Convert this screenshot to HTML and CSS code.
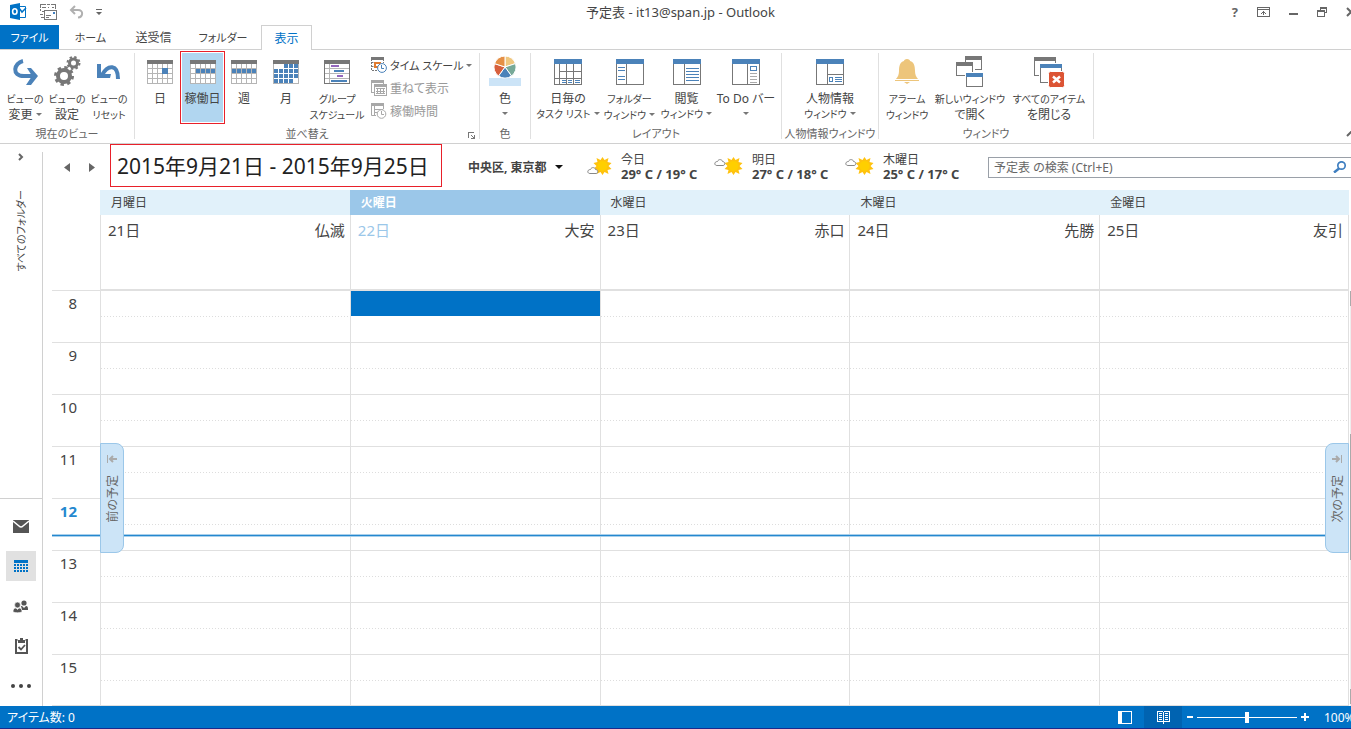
FILE: index.html
```html
<!DOCTYPE html>
<html lang="ja">
<head>
<meta charset="utf-8">
<title>予定表 - it13@span.jp - Outlook</title>
<link rel="stylesheet" href="styles.css">
</head>
<body>
<header class="titlebar">
  <div class="quick">
    <svg width="18" height="18" viewBox="0 0 18 18"><path fill="#fff" stroke="#0072c6" d="M8 3.500h7.500v11H8z"/><path d="M9 5l3 4 4-4" fill="none" stroke="#0072c6" stroke-width="1.500"/><path fill="#0072c6" d="M0 2l10-2v17L0 15z"/><ellipse cx="4.800" cy="8.500" rx="2.200" ry="2.800" fill="none" stroke="#fff" stroke-width="1.600"/></svg>
    <button class="plain" aria-label="送受信"><svg width="17" height="17" viewBox="0 0 17 17" fill="none" stroke="#777" shape-rendering="crispEdges"><path d="M.5 8V6M.5 5V1.500H6M7 1.500h3M11 1.500h4.500V6M2 4.500h4M8 4.500h1M12 4.500h2M0 11.500h3M1 14.500h3M2 8.500h2M4.500 7.500h12v9h-12zM6 12.500h5M6 14.500h3"/><path stroke="#3f7fc0" d="M13 9.500h2M13 10.500h2"/></svg></button>
    <button class="plain" aria-label="元に戻す"><svg width="15" height="14" viewBox="0 0 15 14" fill="none" stroke="#b0b0b0" stroke-width="2"><path d="M6 1L2 5l4 4M2 5h7c6 0 5 7 0 7.500"/></svg></button>
    <button class="plain" aria-label="カスタマイズ"><svg width="7" height="6" viewBox="0 0 7 6"><path fill="#666" d="M0 0h6v1H0zM0 3h6L3 6z"/></svg></button>
  </div>
  <h1 class="apptitle">予定表 - it13@span.jp - Outlook</h1>
  <div class="wincontrols">
    <button class="plain help" aria-label="ヘルプ">?</button>
    <button class="plain" aria-label="リボン"><svg width="13" height="11" viewBox="0 0 13 11" fill="none" stroke="#666" shape-rendering="crispEdges"><path d="M.5.500h12v9H.5zM0 2.500h13M6.500 4v4M5.500 5v1M7.500 5v1M4.500 6v1M8.500 6v1"/></svg></button>
    <button class="plain" aria-label="最小化"><svg width="9" height="11" viewBox="0 0 9 11"><path fill="#666" d="M0 6h9v2H0z"/></svg></button>
    <button class="plain" aria-label="元のサイズ"><svg width="10" height="11" viewBox="0 0 10 11" fill="none" stroke="#666" shape-rendering="crispEdges"><path d="M.5 4.500h7v5h-7zM0 3.500h8M3 3V.5h6.500v5H8M3 1.500h7"/></svg></button>
    <button class="plain" aria-label="閉じる"><svg width="10" height="11" viewBox="0 0 10 11"><path stroke="#666" stroke-width="2" d="M1 1l8 8M9 1L1 9"/></svg></button>
  </div>
</header>

<nav class="tabs">
  <button class="tab file">ファイル</button>
  <button class="tab home kana">ホーム</button>
  <button class="tab home">送受信</button>
  <button class="tab folder kana">フォルダー</button>
  <button class="tab active">表示</button>
</nav>

<section class="ribbon">
  <div class="group g-view">
    <div class="tools">
      <button class="big w42"><svg width="28" height="28" viewBox="0 0 28 28"><path fill="none" stroke="#4b82b9" stroke-width="4" d="M12 3C3 5 0 18 13 18h9"/><path fill="#4b82b9" d="M16 10h4l7 8-7 9h-5l6-9z"/></svg><span><small>ビューの</small><br>変更 <i class="arrow"></i></span></button>
      <button class="big w42"><svg width="28" height="32" viewBox="0 0 28 32" fill="none" stroke="#777"><circle cx="11" cy="20" r="6" stroke-width="4"/><circle cx="11" cy="20" r="8.500" stroke-width="3" stroke-dasharray="3.340 3.340"/><circle cx="20.500" cy="7" r="4" stroke-width="3"/><circle cx="20.500" cy="7" r="6" stroke-width="2" stroke-dasharray="2.360 2.360"/></svg><span><small>ビューの</small><br>設定</span></button>
      <button class="big w42"><svg width="26" height="24" viewBox="0 0 26 24"><path fill="none" stroke="#4b82b9" stroke-width="4" d="M6 15C12 4 22 4 22 19"/><path fill="#4b82b9" d="M1 4h4v10h10l-1 4H1z"/></svg><span><small>ビューの</small><br><small>リセット</small></span></button>
    </div>
    <h2>現在のビュー</h2>
  </div>
  <div class="group g-arrange">
    <div class="tools">
      <button class="big w42"><svg width="26" height="24" viewBox="0 0 26 24" shape-rendering="crispEdges"><path fill="none" stroke="#b5b5b5" d="M.5 4v19.500h25V4M5.500 4v20M10.500 4v20M15.500 4v20M20.500 4v20M0 8.500h26M0 13.500h26M0 18.500h26"/><path fill="#777" d="M0 0h26v4H0z"/><path fill="#4b82b9" d="M15 8h6v6h-6z"/></svg><span>日</span></button>
      <button class="big picked"><svg width="26" height="24" viewBox="0 0 26 24" shape-rendering="crispEdges"><path fill="#fff" d="M0 0h26v24H0z"/><path fill="none" stroke="#b5b5b5" d="M.5 4v19.500h25V4M5.500 4v20M10.500 4v20M15.500 4v20M20.500 4v20M0 8.500h26M0 13.500h26M0 18.500h26"/><path fill="#777" d="M0 0h26v4H0z"/><path fill="#4b82b9" d="M6 9h4v4H6zM11 9h4v4h-4zM16 9h4v4h-4zM21 9h4v4h-4z"/></svg><span>稼働日</span></button>
      <button class="big w42"><svg width="26" height="24" viewBox="0 0 26 24" shape-rendering="crispEdges"><path fill="none" stroke="#b5b5b5" d="M.5 4v19.500h25V4M5.500 4v20M10.500 4v20M15.500 4v20M20.500 4v20M0 8.500h26M0 13.500h26M0 18.500h26"/><path fill="#777" d="M0 0h26v4H0z"/><path fill="#4b82b9" d="M1 9h4v4H1zM6 9h4v4H6zM11 9h4v4h-4zM16 9h4v4h-4zM21 9h4v4h-4z"/></svg><span>週</span></button>
      <button class="big w42"><svg width="26" height="24" viewBox="0 0 26 24" shape-rendering="crispEdges"><path fill="none" stroke="#b5b5b5" d="M.5 4v19.500h25V4"/><path fill="#777" d="M0 0h26v4H0z"/><path fill="none" stroke="#4b82b9" stroke-width="4" stroke-dasharray="4 1" d="M11 6h14M1 11h24M1 16h24M1 21h19"/></svg><span>月</span></button>
      <button class="big w60"><svg width="26" height="24" viewBox="0 0 26 24" shape-rendering="crispEdges"><path fill="none" stroke="#b5b5b5" d="M5.500 4v20M0 8.500h26M0 13.500h26M0 18.500h26"/><path fill="none" stroke="#777" d="M.5 4v19.500h25V4"/><path fill="#777" d="M0 0h26v4H0z"/><path stroke="#9467bd" stroke-width="2" d="M7 6h8M13 16h6"/><path stroke="#4b82b9" stroke-width="2" d="M10 11h10M7 21h16"/></svg><span><small>グループ</small><br><small>スケジュール</small></span></button>
      <div class="stack">
        <button class="small kana"><svg width="16" height="16" viewBox="0 0 16 16" fill="none"><path stroke="#777" d="M.5 2v11.500H6M.5 5.500h3M.5 9.500h3M12.500 2v4" stroke-dasharray="2 1"/><path fill="#777" d="M0 0h13v3H0z"/><path stroke="#e07b2f" stroke-width="2" d="M4 6h5v4H4z"/><circle cx="11" cy="11" r="4.400" fill="#fff" stroke="#4b82b9"/><path stroke="#4b82b9" d="M10.500 8v3.500H13"/></svg><span>タイム スケール <i class="arrow"></i></span></button>
        <button class="small" disabled><svg width="16" height="16" viewBox="0 0 16 16" fill="none" stroke="#a8a8a8" shape-rendering="crispEdges"><path d="M.5 2v10.500H3M12.500 2v2M3.500 6v9.500h12V6M6.500 8v6M9.500 8v6M12.500 8v6M5 8.500h9M5 11.500h9M5 13.500h9"/><path stroke-width="3" d="M0 1.500h13M3 5.500h13"/></svg><span>重ねて表示</span></button>
        <button class="small" disabled><svg width="16" height="16" viewBox="0 0 16 16" fill="none" stroke="#a8a8a8"><path stroke-width="3" d="M0 1.500h13"/><path d="M.5 2v10.500H5M3.500 3v9M4 6.500h8M4 9.500h3M12.500 2v4"/><circle cx="10.500" cy="11" r="4.300" fill="#fff"/><path d="M10.500 8v3.500H13"/></svg><span>稼働時間</span></button>
      </div>
    </div>
    <h2>並べ替え</h2>
    <button class="plain launcher" aria-label="ダイアログ"><svg width="7" height="7" viewBox="0 0 7 7" fill="none" stroke="#777" shape-rendering="crispEdges"><path d="M.5 6V.5H6M3 3l3 3M6.500 3v3.500H3"/></svg></button>
  </div>
  <div class="group g-color">
    <div class="tools">
      <button class="big w42"><svg width="32" height="32" viewBox="0 0 32 32"><path fill="#cce4f7" d="M0 22h32v8H0z"/><g stroke="#fff"><path fill="#efc77f" d="M16 11V0a11 11 0 0 1 10.500 7.600z"/><path fill="#77a998" d="M16 11l10.500-3.400A11 11 0 0 1 22.500 20z"/><path fill="#4b82b9" d="M16 11l6.500 9a11 11 0 0 1-13 0z"/><path fill="#d75f3c" d="M16 11l-6.500 9A11 11 0 0 1 5.500 7.600z"/><path fill="#e58f45" d="M16 11L5.500 7.600A11 11 0 0 1 16 0z"/></g></svg><span>色<br><i class="arrow"></i></span></button>
    </div>
    <h2>色</h2>
  </div>
  <div class="group g-layout">
    <div class="tools">
      <button class="big w66"><svg width="28" height="26" viewBox="0 0 28 26" shape-rendering="crispEdges"><path fill="none" stroke="#777" d="M.5 5v20.500h27V5M5.500 5v20M12.500 5v20M19.500 5v20M5 12.500h22M0 19.500h28"/><path fill="#4b82b9" d="M0 0h28v5H0z"/><path stroke="#4b82b9" d="M8 21.500h4M14 21.500h4M21 21.500h5M8 23.500h4M14 23.500h4M21 23.500h5"/></svg><span>日毎の<br><small>タスク リスト</small> <i class="arrow"></i></span></button>
      <button class="big w56"><svg width="28" height="26" viewBox="0 0 28 26" shape-rendering="crispEdges"><path fill="none" stroke="#777" d="M.5 5v20.500h27V5M10.500 5v20"/><path fill="#4b82b9" d="M0 0h28v5H0z"/><path stroke="#4b82b9" d="M2 8.500h7M2 11.500h7M2 17.500h7M2 20.500h7"/></svg><span><small>フォルダー</small><br><small>ウィンドウ</small> <i class="arrow"></i></span></button>
      <button class="big w56"><svg width="28" height="26" viewBox="0 0 28 26" shape-rendering="crispEdges"><path fill="none" stroke="#777" d="M.5 5v20.500h27V5M11.500 5v20"/><path fill="#4b82b9" d="M0 0h28v5H0z"/><path stroke="#4b82b9" d="M13 9.500h13M13 12.500h13M13 15.500h13M13 18.500h13M13 21.500h13"/></svg><span>閲覧<br><small>ウィンドウ</small> <i class="arrow"></i></span></button>
      <button class="big w62"><svg width="28" height="26" viewBox="0 0 28 26" shape-rendering="crispEdges"><path fill="none" stroke="#777" d="M.5 5v20.500h27V5M15.500 5v20"/><path fill="#4b82b9" d="M0 0h28v5H0z"/><path fill="none" stroke="#4b82b9" d="M18.500 7.500h6v4h-6z"/><path stroke="#aaa" d="M18 14.500h7M18 17.500h7M18 20.500h7M18 23.500h7"/></svg><span>To Do バー<br><i class="arrow"></i></span></button>
    </div>
    <h2>レイアウト</h2>
  </div>
  <div class="group g-people">
    <div class="tools">
      <button class="big w56"><svg width="28" height="26" viewBox="0 0 28 26" shape-rendering="crispEdges"><path fill="none" stroke="#777" d="M.5 5v20.500h27V5M11.500 5v20M11 15.500h17"/><path fill="#4b82b9" d="M0 0h28v5H0z"/><path fill="none" stroke="#4b82b9" d="M13.500 18.500h3v4h-3zM19 18.500h7M19 20.500h7M19 22.500h7"/></svg><span>人物情報<br><small>ウィンドウ</small> <i class="arrow"></i></span></button>
    </div>
    <h2>人物情報ウィンドウ</h2>
  </div>
  <div class="group g-window">
    <div class="tools">
      <button class="big w50"><svg width="24" height="28" viewBox="0 0 24 28" fill="#edc57b"><path d="M12 1c2 0 3 1 3 2 4 1 5 5 5 10 0 3 1 6 3 8H1c2-2 3-5 3-8C4 8 5 4 9 3c0-1 1-2 3-2zM0 22h24v1H0zM9 24h6l-3 2z"/></svg><span><small>アラーム</small><br><small>ウィンドウ</small></span></button>
      <button class="big w76"><svg width="28" height="32" viewBox="0 0 28 32" shape-rendering="crispEdges"><path fill="#fff" stroke="#777" d="M9.500 1.500h16v12h-16z"/><path fill="#777" d="M9 0h17v4H9z"/><path fill="#fff" d="M0 6h19v15H0z"/><path fill="#fff" stroke="#777" d="M.5 7.500h16v12H.5z"/><path fill="#777" d="M0 6h17v4H0z"/><path fill="#fff" d="M9 16h19v15H9z"/><path fill="#fff" stroke="#777" d="M10.500 17.500h16v13h-16z"/><path fill="#4b82b9" d="M10 17h17v4H10z"/></svg><span><small>新しいウィンドウ</small><br>で開く</span></button>
      <button class="big w80"><svg width="32" height="32" viewBox="0 0 32 32"><g shape-rendering="crispEdges"><path fill="#fff" stroke="#777" d="M1.500 1.500h21v18h-21z"/><path fill="#777" d="M1 1h22v4H1z"/><path fill="#fff" d="M6 7h24v22H6z"/><path fill="#fff" stroke="#777" d="M7.500 8.500h21v18h-21z"/><path fill="#4b82b9" d="M7 8h22v4H7z"/></g><rect x="15.500" y="15.500" width="16" height="16" rx="2" fill="#dc5434" stroke="#fff"/><path stroke="#fff" stroke-width="2.500" d="M20 20.500l7 6M27 20.500l-7 6"/></svg><span><small>すべてのアイテム</small><br>を閉じる</span></button>
    </div>
    <h2>ウィンドウ</h2>
  </div>
  <button class="plain collapse" aria-label="リボンを折りたたむ"><svg width="10" height="6" viewBox="0 0 10 6" fill="none" stroke="#666" stroke-width="2"><path d="M1 5l4-4 4 4"/></svg></button>
</section>

<div class="workspace">
  <aside class="sidebar">
    <button class="plain expand" aria-label="展開"><svg width="6" height="8" viewBox="0 0 6 8" fill="none" stroke="#666" stroke-width="2"><path d="M1 1l3 3-3 3"/></svg></button>
    <button class="plain vertical">すべてのフォルダー</button>
    <nav class="modules">
      <button class="module" aria-label="メール"><svg width="16" height="13" viewBox="0 0 16 13"><path fill="#555" d="M0 0h16v13H0z"/><path fill="none" stroke="#fff" stroke-width="1.500" d="M0 1l6 5q2 2 4 0l6-5"/></svg></button>
      <button class="module current" aria-label="予定表"><svg width="14" height="13" viewBox="0 0 14 13" shape-rendering="crispEdges"><path fill="#0072c6" d="M0 0h14v3H0z"/><path stroke="#0072c6" stroke-width="2" stroke-dasharray="2 1" d="M0 5h14M0 8h14M0 11h14"/></svg></button>
      <button class="module" aria-label="連絡先"><svg width="16" height="13" viewBox="0 0 16 13" fill="#555"><circle cx="11" cy="3" r="2.600"/><path d="M8 6h1l2 2 2-2c2 0 2 2 2 4H9z"/><g stroke="#fff" stroke-width=".6"><circle cx="4.500" cy="5" r="2.900"/><path d="M0 12c0-3 1-4 3-4l1.500 1.500L6 8c2 0 3 1 3 4-3 1-6 1-9 0z"/></g></svg></button>
      <button class="module" aria-label="タスク"><svg width="13" height="16" viewBox="0 0 13 16" fill="none" stroke="#555"><path stroke-width="2" d="M2.500 2H1v13h11V2h-1.500"/><path fill="#555" stroke="none" d="M3 5V2h2V0h3v2h2v3z"/><path stroke-width="1.800" d="M3.500 9l2.500 2.500L10 7"/></svg></button>
      <button class="module" aria-label="その他"><svg width="20" height="4" viewBox="0 0 20 4" fill="#444"><circle cx="2" cy="2" r="2"/><circle cx="10" cy="2" r="2"/><circle cx="18" cy="2" r="2"/></svg></button>
    </nav>
  </aside>

  <main class="calendar">
    <div class="datebar">
      <div class="pager">
        <button class="plain" aria-label="前へ"><svg width="6" height="9" viewBox="0 0 6 9"><path fill="#666" d="M6 0v9L0 4.500z"/></svg></button>
        <button class="plain" aria-label="次へ"><svg width="6" height="9" viewBox="0 0 6 9"><path fill="#666" d="M0 0v9l6-4.500z"/></svg></button>
      </div>
      <h2 class="range">2015年9月21日 - 2015年9月25日</h2>
      <button class="plain place">中央区, 東京都 <i class="arrow dark"></i></button>
      <div class="weather">
        <svg width="26" height="24" viewBox="0 0 26 24"><path fill="#ffc20e" d="M15.500 2l2 3 4-2-1 4 4 1-3 3 3 3-4 1 1 4-4-2-2 3-2-3-4 2 1-4-4-1 3-3-3-3 4-1-1-4 4 2z"/><circle cx="15.500" cy="11" r="5" fill="#ffcf00"/><path fill="#fff" stroke="#888" d="M3 18.500c-3 0-3-4 .5-4 1-3 5-2 5 0 3 0 3 4 .5 4z"/></svg>
        <p>今日<b>29° C / 19° C</b></p>
      </div>
      <div class="weather">
        <svg width="30" height="24" viewBox="0 0 30 24"><path fill="#ffc20e" d="M19.500 2l2 3 4-2-1 4 4 1-3 3 3 3-4 1 1 4-4-2-2 3-2-3-4 2 1-4-4-1 3-3-3-3 4-1-1-4 4 2z"/><circle cx="19.500" cy="11" r="5" fill="#ffcf00"/><path fill="#fff" stroke="#888" d="M3 10.500c-3 0-3-4 .5-4 1-3 5-2 5 0 3 0 3 4 .5 4z"/></svg>
        <p>明日<b>27° C / 18° C</b></p>
      </div>
      <div class="weather">
        <svg width="30" height="24" viewBox="0 0 30 24"><path fill="#ffc20e" d="M19.500 2l2 3 4-2-1 4 4 1-3 3 3 3-4 1 1 4-4-2-2 3-2-3-4 2 1-4-4-1 3-3-3-3 4-1-1-4 4 2z"/><circle cx="19.500" cy="11" r="5" fill="#ffcf00"/><path fill="#fff" stroke="#888" d="M3 10.500c-3 0-3-4 .5-4 1-3 5-2 5 0 3 0 3 4 .5 4z"/></svg>
        <p>木曜日<b>25° C / 17° C</b></p>
      </div>
      <div class="search">
        <input type="search" aria-label="予定表 の検索" placeholder="予定表 の検索 (Ctrl+E)">
        <button class="plain" aria-label="検索"><svg width="14" height="12" viewBox="0 0 14 12" fill="none" stroke="#3f7fc0"><circle cx="8.500" cy="4.500" r="3.700" stroke-width="1.700"/><path stroke-width="2.500" d="M6 7.500L1 11.500"/></svg></button>
      </div>
    </div>

    <div class="board">
      <table class="week">
        <colgroup><col class="hourcol"><col><col><col><col><col></colgroup>
        <thead>
          <tr class="names"><td></td><th>月曜日</th><th class="today">火曜日</th><th>水曜日</th><th>木曜日</th><th>金曜日</th></tr>
          <tr class="dates"><td></td>
            <td><div class="date"><span>21日</span><span>仏滅</span></div></td>
            <td><div class="date"><span class="now">22日</span><span>大安</span></div></td>
            <td><div class="date"><span>23日</span><span>赤口</span></div></td>
            <td><div class="date"><span>24日</span><span>先勝</span></div></td>
            <td><div class="date"><span>25日</span><span>友引</span></div></td></tr>
        </thead>
        <tbody>
          <tr><th>8</th><td></td><td class="selected"></td><td></td><td></td><td></td></tr>
          <tr><th>9</th><td></td><td></td><td></td><td></td><td></td></tr>
          <tr><th>10</th><td></td><td></td><td></td><td></td><td></td></tr>
          <tr><th>11</th><td></td><td></td><td></td><td></td><td></td></tr>
          <tr><th class="nowhour">12</th><td></td><td></td><td></td><td></td><td></td></tr>
          <tr><th>13</th><td></td><td></td><td></td><td></td><td></td></tr>
          <tr><th>14</th><td></td><td></td><td></td><td></td><td></td></tr>
          <tr><th>15</th><td></td><td></td><td></td><td></td><td></td></tr>
        </tbody>
      </table>
      <div class="timeline"></div>
      <button class="jump prev"><svg width="10" height="8" viewBox="0 0 10 8" fill="none" stroke="#aaa"><path d="M.5 0v8"/><path stroke-width="2" d="M10 4H3M6 1L3 4l3 3"/></svg><span>前の予定</span></button>
      <button class="jump next"><svg width="10" height="8" viewBox="0 0 10 8" fill="none" stroke="#aaa"><path d="M9.500 0v8"/><path stroke-width="2" d="M0 4h7M4 1l3 3-3 3"/></svg><span>次の予定</span></button>
      <div class="track"></div>
    </div>
  </main>
</div>

<footer class="status">
  <span class="count">アイテム数: 0</span>
  <button class="viewbtn" aria-label="標準"><svg width="14" height="13" viewBox="0 0 14 13" shape-rendering="crispEdges"><path fill="none" stroke="#fff" d="M.5.500h13v12H.5z"/><path fill="#fff" d="M0 0h4v13H0z"/></svg></button>
  <button class="viewbtn on" aria-label="閲覧"><svg width="13" height="13" viewBox="0 0 13 13" fill="none" stroke="#fff" shape-rendering="crispEdges"><path d="M.5.500h5l1 1 1-1h5v10h-5l-1 1-1-1h-5zM6.500 1v12M2 2.500h3M2 4.500h3M2 6.500h3M2 8.500h3M8 2.500h3M8 4.500h3M8 6.500h3M8 8.500h3"/></svg></button>
  <div class="zoom">
    <button class="plain" aria-label="縮小"><svg width="6" height="8" viewBox="0 0 6 8"><path fill="#fff" d="M0 3h6v2H0z"/></svg></button>
    <input type="range" aria-label="ズーム" min="0" max="100" value="50">
    <button class="plain" aria-label="拡大"><svg width="8" height="8" viewBox="0 0 8 8"><path fill="#fff" d="M0 3h8v2H0zM3 0h2v8H3z"/></svg></button>
  </div>
  <button class="plain percent">100%</button>
</footer>
</body>
</html>
```

FILE: styles.css
```css
* { box-sizing: border-box; }

body {
  margin: 0;
  min-height: 100vh;
  display: flex;
  flex-direction: column;
  background: #fff;
  color: #444;
  font: 12px/15px "Noto Sans", "Noto Sans CJK JP", sans-serif;
  font-feature-settings: "palt";
  overflow: hidden;
}

button, input { font: inherit; font-feature-settings: inherit; color: inherit; }
button { border: 0; background: none; padding: 0; }
h1, h2, p { margin: 0; font-weight: normal; font-size: 12px; }
svg { display: block; flex: none; }
.plain { display: flex; align-items: center; justify-content: center; }

/* Title bar */
.titlebar {
  display: grid;
  grid-template-columns: 1fr auto 1fr;
  align-items: center;
  height: 25px;
  padding-left: 10px;
  overflow: hidden;
}
.quick { display: flex; align-items: center; gap: 12px; padding-bottom: 2px; }
.apptitle { font-size: 13px; }
.wincontrols {
  display: flex;
  align-items: center;
  justify-content: flex-end;
  gap: 19px;
  margin-right: -5px;
}
.help { font-weight: bold; font-size: 13px; color: #666; }

/* Tabs */
.tabs { display: flex; height: 25px; border-bottom: 1px solid #d0d0d0; font-size: 12px; }
.tab { height: 24px; text-align: center; white-space: nowrap; }
.kana { font-size: 11px; }
.file { width: 59px; background: #0072c6; color: #fff; font-size: 11px; }
.home { width: 63px; }
.folder { width: 76px; }
.active {
  width: 51px;
  height: 25px;
  background: #fff;
  border: 1px solid #d0d0d0;
  border-bottom: 0;
  color: #0072c6;
}

/* Ribbon */
.ribbon {
  position: relative;
  display: flex;
  height: 94px;
  padding-top: 3px;
  border-bottom: 1px solid #d0d0d0;
  overflow: hidden;
}
.group {
  position: relative;
  display: flex;
  flex-direction: column;
  align-items: center;
  height: 86px;
  border-right: 1px solid #e0e0e0;
  white-space: nowrap;
}
.group h2 { font-size: 11px; line-height: 16px; color: #666; }
.tools { display: flex; flex: none; height: 75px; margin-top: -2px; }
.g-view { width: 135px; }
.g-arrange { width: 345px; }
.g-arrange .tools { align-self: flex-start; padding-left: 4px; }
.g-color { width: 51px; }
.g-layout { width: 251px; }
.g-people { width: 97px; }
.g-window { width: 215px; }

.big {
  display: flex;
  flex-direction: column;
  align-items: center;
  gap: 3px;
  padding-top: 5px;
}
.big svg { height: 32px; }
.big small { font-size: 10px; }
.w42 { width: 42px; }
.w50 { width: 50px; }
.w56 { width: 57px; }
.w60 { width: 60px; }
.w62 { width: 62px; }
.w66 { width: 66px; }
.w76 { width: 76px; }
.w80 { width: 82px; }
.big span { display: flow-root; }
.picked {
  width: 45px;
  height: 73px;
  margin: 0 -2px 0 -1px;
  padding-top: 4px;
  border: 1px solid #e8202a;
  background: #b1d6f0;
  box-shadow: inset 0 0 0 1px #fff;
}
.arrow {
  display: inline-block;
  vertical-align: 3px;
  border: 3px solid transparent;
  border-top-color: #777;
  border-bottom: 0;
}
.arrow.dark { border-width: 4px 4px 0; border-top-color: #111; margin-left: 8px; vertical-align: 0; }
.stack { display: flex; flex-direction: column; gap: 7px; padding: 6px 0 0 4px; }
.small { display: flex; align-items: center; gap: 3px; height: 16px; }
.small:disabled { color: #999; }
.launcher { position: absolute; right: 4px; bottom: 0; }
.collapse { position: absolute; right: -5px; bottom: 6px; }

/* Workspace */
.workspace { display: flex; flex: 1; }
.sidebar {
  display: flex;
  flex-direction: column;
  align-items: center;
  width: 43px;
  margin-top: 8px;
  border-right: 1px solid #d0d0d0;
}
.expand { height: 10px; }
.vertical, .jump span {
  writing-mode: vertical-rl;
  text-orientation: sideways;
  transform: rotate(180deg);
}
.vertical { margin-top: 28px; font-size: 10px; }
.modules {
  display: flex;
  flex-direction: column;
  align-items: center;
  gap: 10px;
  width: 100%;
  margin-top: auto;
  padding: 12px 0 5px;
  border-top: 1px solid #d0d0d0;
}
.module { display: flex; align-items: center; justify-content: center; width: 30px; height: 30px; }
.current { background: #e1e1e1; }

.calendar { flex: 1; min-width: 0; padding-left: 9px; }
.datebar { display: flex; align-items: center; height: 46px; white-space: nowrap; }
.pager { display: flex; gap: 19px; width: 58px; padding-left: 12px; }
.range {
  align-self: flex-start;
  width: 332px;
  height: 43px;
  padding-left: 6px;
  border: 1px solid #e8202a;
  font-size: 21px;
  line-height: 43px;
  color: #222;
}
.place { margin-left: 26px; width: 101px; justify-content: flex-start; font-weight: bold; }
.weather { display: flex; align-items: center; gap: 8px; width: 131px; justify-content: flex-end; }
.weather p { width: 79px; }
.weather b { display: block; font-size: 13px; }
.search {
  display: flex;
  align-items: center;
  flex: 1;
  height: 21px;
  margin-left: 26px;
  padding-right: 4px;
  border: 1px solid #9aa0a8;
  border-right: 0;
}
.search input { flex: 1; min-width: 0; border: 0; outline: 0; padding: 0 0 0 5px; background: none; }
.search input::placeholder { color: #666; opacity: 1; }

.board { position: relative; padding-right: 2px; }
.week { width: 100%; table-layout: fixed; border-collapse: separate; border-spacing: 0; }
.week td, .week th { padding: 0; font-weight: normal; }
.hourcol { width: 48px; }
.names th { height: 25px; padding-left: 11px; text-align: left; background: #e1f1fa; }
.names .today { background: #9bc7e9; color: #fff; font-weight: bold; }
.dates td { height: 76px; vertical-align: top; border-left: 1px solid #e0e0e0; border-bottom: 2px solid #e0e0e0; }
.dates td:first-child { border-left: 0; border-bottom: 1px solid #e0e0e0; }
.dates td:last-child, .week tbody td:last-child { border-right: 1px solid #e0e0e0; }
.date { display: flex; justify-content: space-between; padding: 5px 5px 0 7px; font-size: 15px; line-height: 20px; }
.now { color: #9bc7e9; }
.week tbody th {
  height: 52px;
  padding: 2px 23px 0 0;
  vertical-align: top;
  text-align: right;
  font-size: 15px;
  line-height: 20px;
  border-bottom: 1px solid #e0e0e0;
}
.week tbody tr:last-child th { height: 51px; }
.week tbody .nowhour { color: #2488cf; font-weight: bold; }
.week tbody td {
  border-left: 1px solid #e0e0e0;
  border-bottom: 1px solid #e0e0e0;
  background: repeating-linear-gradient(90deg, #ddd 0 1px, transparent 1px 3px) 0 25px / 100% 1px no-repeat;
}
.week tbody .selected { background: linear-gradient(#0072c6, #0072c6) 0 0 / 100% 25px no-repeat; }
.timeline {
  position: absolute;
  left: 0;
  right: 2px;
  top: 344px;
  height: 3px;
  background: #2488cf;
  border: solid #a9d0ec;
  border-width: 1px 0;
}
.jump {
  position: absolute;
  top: 253px;
  display: flex;
  flex-direction: column;
  align-items: center;
  gap: 12px;
  width: 24px;
  height: 110px;
  padding-top: 11px;
  border: 1px solid #9bc7e9;
  background: #cce4f7;
  color: #666;
}
.prev { left: 48px; border-radius: 0 8px 8px 0; }
.next { right: 2px; border-radius: 8px 0 0 8px; }
.track {
  position: absolute;
  right: 0;
  top: 101px;
  bottom: 0;
  width: 1px;
  background: linear-gradient(#aaa 0 15px, #eee 15px 143px, #aaa 143px 269px, #eee 269px 398px, #aaa 398px 413px, #eee 413px);
}

/* Status bar */
.status {
  display: flex;
  align-items: center;
  height: 23px;
  background: #0072c6;
  border-bottom: 1px solid #1b2a8c;
  color: #fff;
  overflow: hidden;
}
.count { flex: 1; padding-left: 7px; }
.viewbtn { display: flex; align-items: center; justify-content: center; width: 38px; height: 22px; }
.on { background: #0063b1; }
.zoom { display: flex; align-items: center; gap: 4px; margin-left: 5px; }
.zoom input { appearance: none; width: 100px; height: 11px; margin: 0; background: linear-gradient(#fff, #fff) 0 5px / 100% 1px no-repeat; }
.zoom input::-webkit-slider-thumb { appearance: none; width: 4px; height: 11px; background: #fff; }
.percent { width: 30px; margin: 0 -3px 0 15px; justify-content: flex-start; font-size: 12px; }
```
